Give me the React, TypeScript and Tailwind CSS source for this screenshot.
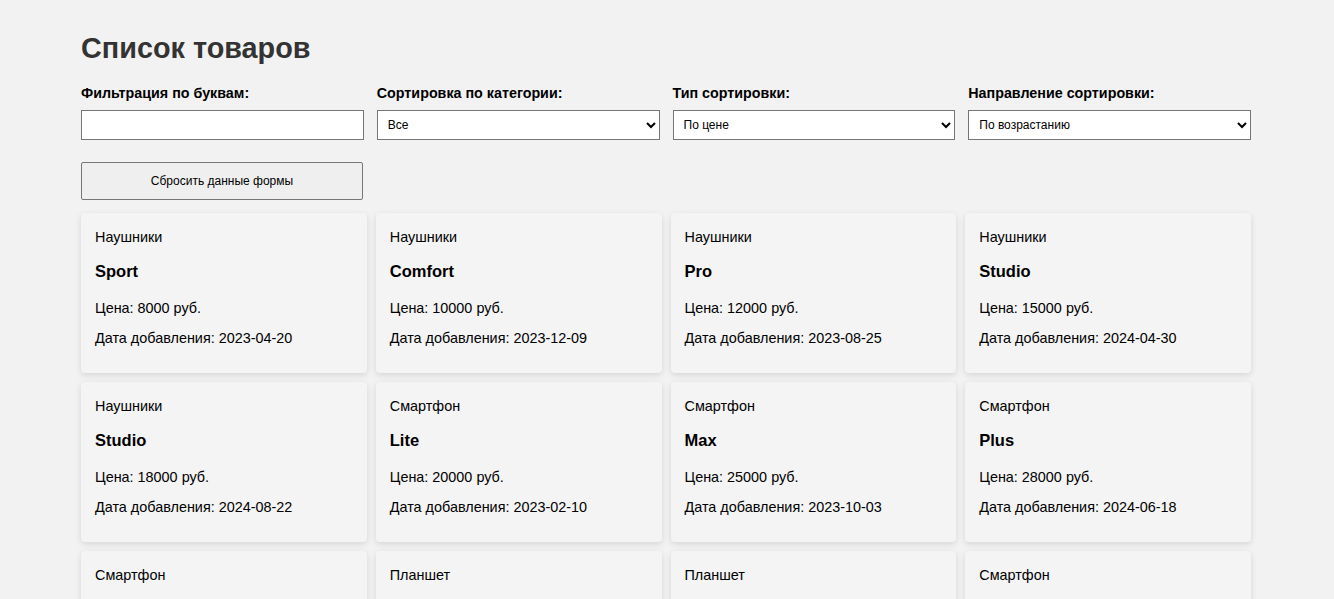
import React from "react";

const items = [
  ["Наушники", "Sport", 8000, "2023-04-20"],
  ["Наушники", "Comfort", 10000, "2023-12-09"],
  ["Наушники", "Pro", 12000, "2023-08-25"],
  ["Наушники", "Studio", 15000, "2024-04-30"],
  ["Наушники", "Studio", 18000, "2024-08-22"],
  ["Смартфон", "Lite", 20000, "2023-02-10"],
  ["Смартфон", "Max", 25000, "2023-10-03"],
  ["Смартфон", "Plus", 28000, "2024-06-18"],
  ["Смартфон", "Ultra", 30000, "2024-01-15"],
  ["Планшет", "Mini", 32000, "2023-05-11"],
  ["Планшет", "Air", 35000, "2024-02-02"],
  ["Смартфон", "Pro", 40000, "2024-03-20"],
] as const;

export default function App() {
  return (
    <div
      className="min-h-[599px] bg-[#f2f2f2] text-black"
      style={{ fontFamily: '"Liberation Sans", Arial, sans-serif' }}
    >
      <div className="ml-[81px] w-[1170px] pt-[31px]">
        <h1 className="text-[28.8px] font-bold leading-[34px] text-[#333]">Список товаров</h1>
        <div className="mt-[20px] grid grid-cols-4 gap-x-[13px]">
          <div className="flex flex-col">
            <label className="text-[14.3px] font-bold leading-[16px]">Фильтрация по буквам:</label>
            <input className="mt-[9px] h-[30px] w-full border border-[#767676] bg-white px-2 text-[12px]" />
          </div>
          <div className="flex flex-col">
            <label className="text-[14.3px] font-bold leading-[16px]">Сортировка по категории:</label>
            <select className="mt-[9px] h-[30px] w-full rounded-none border border-[#767676] bg-white px-[6px] text-[12px]">
              <option>Все</option>
            </select>
          </div>
          <div className="flex flex-col">
            <label className="text-[14.3px] font-bold leading-[16px]">Тип сортировки:</label>
            <select className="mt-[9px] h-[30px] w-full rounded-none border border-[#767676] bg-white px-[6px] text-[12px]">
              <option>По цене</option>
            </select>
          </div>
          <div className="flex flex-col">
            <label className="text-[14.3px] font-bold leading-[16px]">Направление сортировки:</label>
            <select className="mt-[9px] h-[30px] w-full rounded-none border border-[#767676] bg-white px-[6px] text-[12px]">
              <option>По возрастанию</option>
            </select>
          </div>
        </div>
        <button className="mt-[22px] h-[38px] w-[282px] rounded-[2px] border border-[#767676] bg-[#efefef] text-[12px] text-black">
          Сбросить данные формы
        </button>
        <div className="mt-[13px] grid grid-cols-4 gap-x-[9px] gap-y-[9px]">
          {items.map(([cat, name, price, date], i) => (
            <div
              key={i}
              className="h-[160px] rounded-[4px] bg-[#f4f4f4] px-[14px] pt-[16px] shadow-[0_2px_6px_rgba(0,0,0,0.12)]"
            >
              <div className="text-[14.4px] leading-[16px]">{cat}</div>
              <div className="mt-[17px] text-[16.5px] font-bold leading-[19px]">{name}</div>
              <div className="mt-[19px] text-[14.4px] leading-[16px]">Цена: {price} руб.</div>
              <div className="mt-[14px] text-[14.4px] leading-[16px]">Дата добавления: {date}</div>
            </div>
          ))}
        </div>
      </div>
    </div>
  );
}
